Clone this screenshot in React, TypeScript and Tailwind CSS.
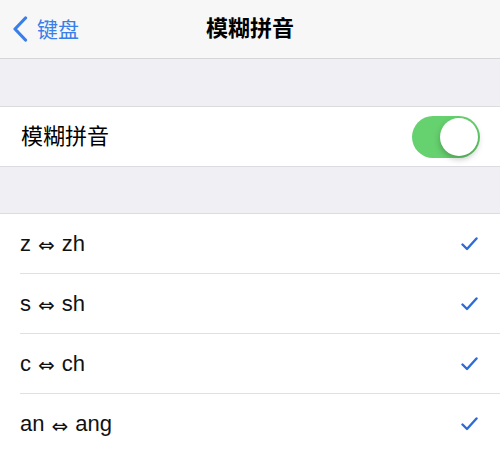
import React from 'react';

const font = { fontFamily: '"Liberation Sans", "Noto Sans CJK SC", sans-serif' };

const pairs = [
  ['z', 'zh'],
  ['s', 'sh'],
  ['c', 'ch'],
  ['an', 'ang'],
];

const Check = () => (
  <svg width="17" height="14" viewBox="0 0 17 14" fill="none">
    <path d="M1.5 7.5 L6 12 L15.5 1.5" stroke="#2f6bd6" strokeWidth="2.4" strokeLinecap="round" strokeLinejoin="round" />
  </svg>
);

const App = () => {
  return (
    <div className="w-[500px] h-[452px] overflow-hidden bg-[#efeff4]" style={font}>
      {/* nav bar */}
      <div className="relative h-[59px] bg-[#f7f7f8] border-b border-[#d6d6d9] flex items-center justify-center">
        <div className="absolute left-[12px] top-0 h-full flex items-center text-[#3a7ee8]">
          <svg width="16" height="26" viewBox="0 0 16 26" fill="none">
            <path d="M13.5 2 L3 13 L13.5 24" stroke="#3a7ee8" strokeWidth="3.2" strokeLinecap="round" strokeLinejoin="round" />
          </svg>
          <span className="ml-[9px] text-[21px] leading-none">键盘</span>
        </div>
        <span className="text-[22px] font-bold text-black leading-none">模糊拼音</span>
      </div>

      <div className="h-[48px] border-b border-[#dcdce0]" />

      {/* toggle row */}
      <div className="h-[60px] bg-white border-b border-[#dcdce0] flex items-center justify-between pl-[21px] pr-[20px]">
        <span className="text-[22px] text-black leading-none">模糊拼音</span>
        <div className="w-[68px] h-[42px] rounded-full bg-[#66d16f] p-[2px] flex justify-end">
          <div className="w-[38px] h-[38px] rounded-full bg-white shadow-[0_3px_6px_rgba(0,0,0,0.25)]" />
        </div>
      </div>

      <div className="h-[47px] border-b border-[#dcdce0]" />

      {/* list */}
      <div className="bg-white">
        {pairs.map(([a, b], i) => (
          <div key={i} className="h-[60px] pl-[20px]">
            <div className={`h-full flex items-center justify-between pr-[22px] ${i < pairs.length - 1 ? 'border-b border-[#e0e0e3]' : ''}`}>
              <span className="text-[22px] text-[#111] leading-none flex items-center">
                {a}
                <span className="mx-[7px] mt-[3px] text-[20px] leading-none" style={{ fontFamily: '"DejaVu Sans", sans-serif' }}>⇔</span>
                {b}
              </span>
              <Check />
            </div>
          </div>
        ))}
      </div>
    </div>
  );
};

export default App;
